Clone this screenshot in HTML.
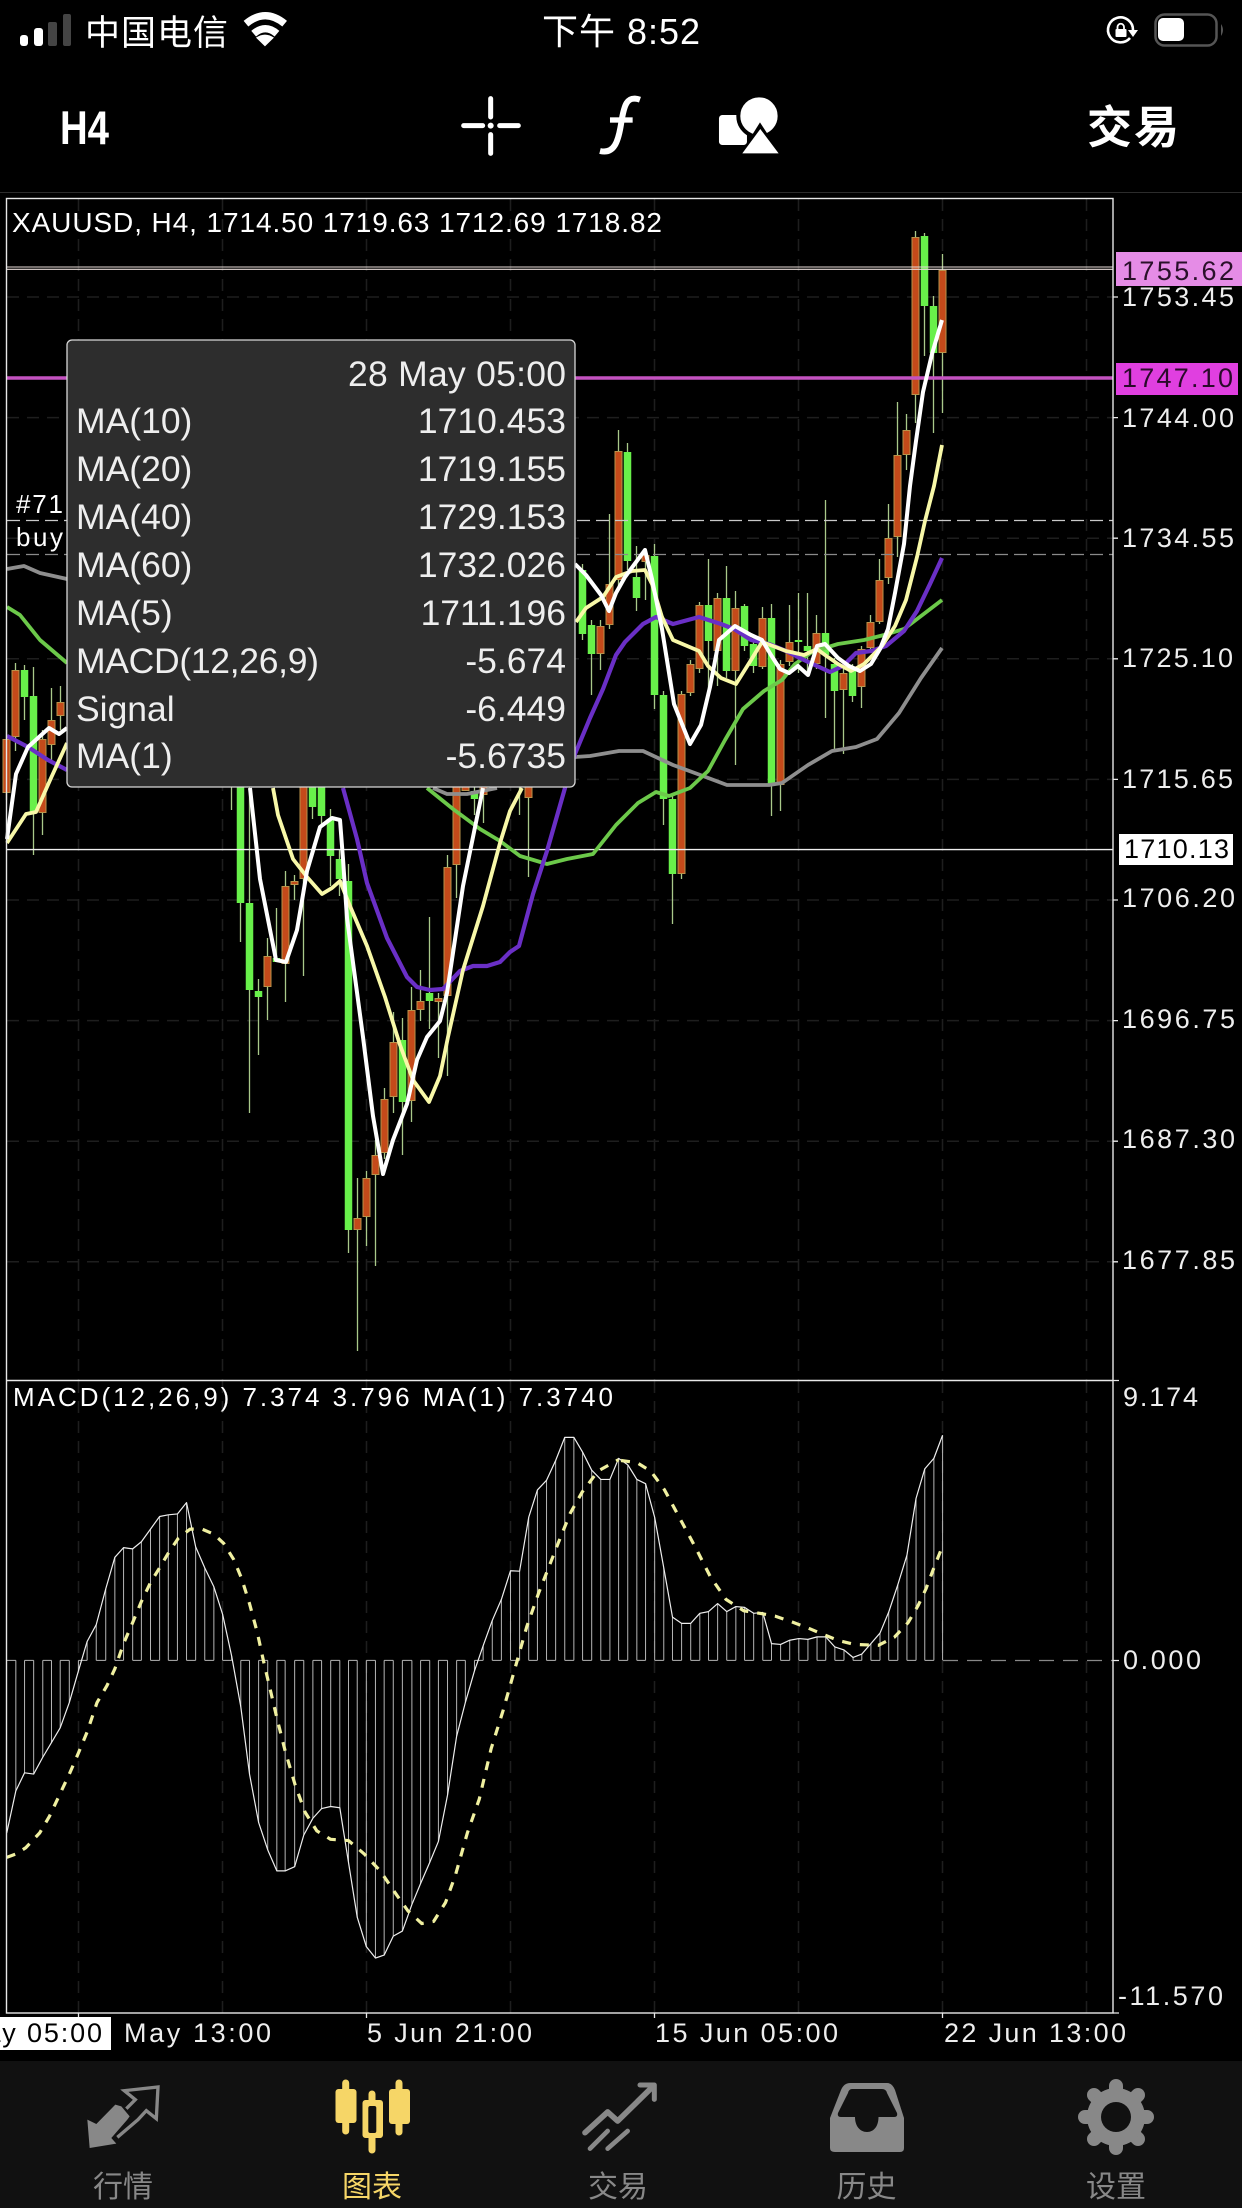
<!DOCTYPE html>
<html>
<head>
<meta charset="utf-8">
<title>XAUUSD H4</title>
<style>
html,body{margin:0;padding:0;background:#000;width:1242px;height:2208px;overflow:hidden}
svg{display:block}
text{font-family:"Liberation Sans","Noto Sans CJK SC",sans-serif;fill:#fff}
.ax{font-size:27px;fill:#eee}
.tm{font-size:27px;fill:#eee}
.tp{font-size:35.5px;fill:#eee}
.tr{font-size:35.5px;fill:#eee;text-anchor:end}
.tab{font-size:30px;fill:#888;text-anchor:middle}
polyline{fill:none;stroke-linejoin:round}
</style>
</head>
<body>
<svg xmlns="http://www.w3.org/2000/svg" width="1242" height="2208" viewBox="0 0 1242 2208">
<rect width="1242" height="2208" fill="#000"/>

<!-- status bar -->
<rect x="20" y="35" width="8" height="11" rx="3" fill="#fff"/>
<rect x="34" y="28" width="9" height="18" rx="3" fill="#fff"/>
<rect x="48" y="22" width="9" height="24" rx="2" fill="#444"/>
<rect x="63" y="14" width="8" height="32" rx="2" fill="#444"/>
<text x="85" y="45" font-size="35" textLength="143">中国电信</text>
<g transform="translate(0,5) scale(.3333)" fill="none" stroke="#fff" stroke-width="22">
<path d="M738 56 Q796 8 854 56"/>
<path d="M761 86 Q796 56 831 86"/>
<path d="M795 124 L768 98 Q795 80 822 98 Z" fill="#fff" stroke="none"/>
</g>
<text x="542" y="44" font-size="36" textLength="158">下午 8:52</text>
<g fill="none" stroke="#fff" stroke-width="2.6">
<path d="M1130 38 A12.5 12.5 0 1 1 1133 30"/>
</g>
<path d="M1128 30 H1138 L1133 37 Z" fill="#fff"/>
<rect x="1115.500" y="29" width="11" height="8" rx="1" fill="#fff"/>
<path d="M1117.500 29 V27 A3 3 0 0 1 1124 27 V29" fill="none" stroke="#fff" stroke-width="1.800"/>
<rect x="1155.500" y="14.500" width="61" height="31" rx="9" fill="none" stroke="#555" stroke-width="2.500"/>
<rect x="1158" y="18" width="26" height="23" rx="5" fill="#fff"/>
<path d="M1221 24 Q1225 30 1221 36 Z" fill="#555"/>

<!-- toolbar -->
<text x="60" y="144" font-size="47" font-weight="700" textLength="49" lengthAdjust="spacingAndGlyphs">H4</text>
<g transform="translate(450,85) scale(.3333)">
<path d="M41 122 H98 M149 122 H205 M122 41 V96 M122 149 V205" stroke="#fff" stroke-width="15" stroke-linecap="round" fill="none"/>
<circle cx="122" cy="122" r="9" fill="#fff"/>
<path d="M570 44 C530 30 522 62 514 112 C505 172 492 208 450 198" stroke="#fff" stroke-width="18" fill="none"/>
<rect x="480" y="97" width="68" height="16" fill="#fff"/>
<rect x="807" y="90" width="84" height="90" rx="10" fill="#fff"/>
<circle cx="927" cy="93" r="62" fill="#fff" stroke="#000" stroke-width="12"/>
<path d="M930 112 L868 212 H995 Z" fill="#000"/>
<path d="M931 132 L877 205 H986 Z" fill="#fff"/>
</g>
<text x="1087" y="143" font-size="45" font-weight="700" textLength="92" style="font-family:'Noto Sans CJK SC',sans-serif">交易</text>
<rect x="0" y="192" width="1242" height="1" fill="#2c2c2c"/>

<!-- grid -->
<g stroke="#1e1e1e" stroke-width="1.500" stroke-dasharray="12 8" fill="none">
<path d="M7 297H1113M7 417.600H1113M7 538.200H1113M7 658.800H1113M7 779.400H1113M7 900H1113M7 1020.600H1113M7 1141.200H1113M7 1261.800H1113"/>
<path d="M78.500 199V1380M222.500 199V1380M366.500 199V1380M510.500 199V1380M654.500 199V1380M798.500 199V1380M942.500 199V1380M1086.500 199V1380"/>
<path d="M78.500 1381V2013M222.500 1381V2013M366.500 1381V2013M510.500 1381V2013M654.500 1381V2013M798.500 1381V2013M942.500 1381V2013M1086.500 1381V2013"/>
</g>

<!-- candles -->
<g transform="translate(.5,0)" fill="none">
<path stroke="#a9c98a" stroke-width="1.300" d="M942 254V413M933 296V433M924 233V356M915 231V423M906 414V470M897 402V557M888 504V584M879 559V624M870 615V651M861 646V708M852 664V702M843 669V754M834 658V749M825 500V718M816 615V669M807 593V673M798 593V673M789 605V666M780 660V811M771 604V816M762 607V669M753 640V673M744 604V651M735 591V765M726 566V678M717 593V686M708 559V691M699 602V673M690 660V696M681 691V879M672 794V924M663 691V825M654 544V709M645 550V600M636 546V611M627 443V570M618 430V590M609 514V629M600 620V670M591 620V695M582 564V640M231 787V810M240 787V942M249 787V1113M258 979V1055M267 938V1020M276 908V962M285 871V1002M294 875V900M303 787V976M312 787V819M321 787V825M330 809V886M339 849V896M348 864V1253M357 1178V1351M366 1171V1246M375 1140V1266M384 1088V1159M393 1012V1113M402 1018V1155M411 987V1122M420 970V1021M429 917V1029M438 993V1058M447 855V1076M456 787V898M474 787V815M483 787V823M519 787V815M528 787V877M6 720V800M15 663V751M24 665V720M33 667V855M42 730V835M51 688V760M60 686V730"/>
<path stroke="#68f04a" stroke-width="7.500" d="M933 306V353M924 236V306M852 669V696M834 664V691M825 633V655M807 646V651M798 640V642M771 618V785M753 644V666M744 606V646M726 598V671M708 605V641M672 799V874M663 695V799M654 556V695M636 577V598M627 452V561M591 625V654M582 570V634M240 787V903M249 903V990M258 991V997M276 958V962M312 787V807M321 787V816M330 819V856M339 859V879M348 881V1230M402 1040V1102M429 993V1001M474 791V799M24 670V697M33 696V813"/>
<path stroke="#b9924a" stroke-width="8" d="M942 270V353M915 237V395M906 430V455M897 455V537M888 538V578M879 580V622M870 622V648M861 649V687M843 673V690M816 633V664M789 642V662M780 664V785M762 618V667M735 608V671M717 598V651M699 605V669M690 664V693M681 694V874M645 555V562M618 451V580M609 584V625M600 626V654M267 956V987M285 886V964M294 881V885M303 787V879M357 1218V1230M366 1178V1217M375 1155V1175M384 1099V1153M393 1042V1097M411 1010V1101M420 1001V1010M438 998V1002M447 867V996M456 787V865M465 787V791M483 787V795M528 787V798M6 739V793M15 670V737M42 739V813M51 720V745M60 702V716"/>
<path stroke="#c44a1a" stroke-width="6" d="M942 271V352M915 238V394M906 431V454M897 456V536M888 539V577M879 581V621M870 623V647M861 650V686M843 674V689M816 634V663M789 643V661M780 665V784M762 619V666M735 609V670M717 599V650M699 606V668M690 665V692M681 695V873M645 556V561M618 452V579M609 585V624M600 627V653M267 957V986M285 887V963M294 882V884M303 787V878M357 1219V1229M366 1179V1216M375 1156V1174M384 1100V1152M393 1043V1096M411 1011V1100M420 1002V1009M438 999V1001M447 868V995M456 787V864M465 787V790M483 787V794M528 787V797M6 740V792M15 671V736M42 740V812M51 721V744M60 703V715"/>
</g>

<!-- horizontal levels -->
<path d="M7 267H1113M7 269.300H1113" stroke="#e8dcd8" stroke-width="1.100"/>
<path d="M7 378H1113" stroke="#c452c0" stroke-width="3.500"/>
<path d="M7 520.500H1113" stroke="#c9c9c9" stroke-width="1.200" stroke-dasharray="13 6"/>
<path d="M7 554.500H1113" stroke="#8a8a8a" stroke-width="1.200" stroke-dasharray="13 6"/>
<path d="M7 849.600H1113" stroke="#eee" stroke-width="1.400"/>

<!-- moving averages -->
<g stroke-width="3.800">
<polyline stroke="#8e8e8e" points="942,648 921,678 899,713 877,739 856,747 832,751 808,765 782,783 769,785 727,785 703,776 673,765 643,751 619,751 590,756 575,757"/>
<polyline stroke="#8e8e8e" points="433,788 447,794 467,794 497,788"/>
<polyline stroke="#8e8e8e" points="7,569 24,566 40,573 67,579"/>
<polyline stroke="#6cc94a" points="942,600 925,613 904,629 884,635 864,640 838,644 812,652 795,664 782,680 764,691 743,709 725,740 708,771 690,788 669,796 656,792 638,803 616,825 593,854 567,859 547,864 520,856 500,841 480,829 453,809 427,788"/>
<polyline stroke="#6cc94a" points="7,607 20,615 40,640 67,663"/>
<polyline stroke="#6a2fc6" stroke-width="4.200" points="942,558 930,584 917,611 904,631 886,646 871,651 856,653 843,666 830,672 817,666 804,660 786,651 769,644 751,640 734,629 721,624 699,617 673,624 656,617 643,624 625,642 616,655 603,689 590,718 575,754 565,788"/>
<polyline stroke="#6a2fc6" stroke-width="4.200" points="343,788 357,839 367,883 387,938 407,977 417,987 430,990 443,989 460,971 473,966 487,966 500,962 510,952 519,946 533,894 547,851 565,788"/>
<polyline stroke="#6a2fc6" stroke-width="4.200" points="7,736 28,747 48,760 67,770"/>
<polyline stroke="#f8f8a8" points="942,445 934,486 925,521 917,557 906,600 895,626 882,646 864,664 851,671 838,664 825,655 817,649 804,655 786,651 773,646 762,642 751,660 736,684 721,678 708,666 699,651 673,640 662,617 652,584 645,570 632,571 616,577 603,597 586,608 576,622"/>
<polyline stroke="#f8f8a8" points="273,788 278,815 293,859 307,877 322,894 332,888 340,881 350,906 367,946 385,997 400,1045 413,1080 429,1102 440,1076 448,1037 463,970 483,906 500,843 510,811 522,788"/>
<polyline stroke="#f8f8a8" points="7,843 26,814 36,812 51,778 67,743"/>
<polyline stroke="#fff" stroke-width="4" points="942,320 932,354 923,392 916,441 910,486 904,544 895,593 888,629 880,649 871,664 860,671 849,666 838,658 825,644 817,646 808,675 798,666 789,673 780,669 771,655 762,640 751,635 735,626 719,640 710,687 701,725 690,744 674,704 662,629 652,579 645,550 625,577 616,593 609,611 601,595 586,575 575,564"/>
<polyline stroke="#fff" stroke-width="4" points="250,788 260,879 276,960 286,962 297,930 307,871 320,827 332,818 340,820 343,859 347,918 363,1037 373,1116 383,1174 393,1140 407,1104 417,1060 427,1037 440,1021 447,993 463,886 483,788"/>
<polyline stroke="#fff" stroke-width="4" points="7,839 16,774 28,747 49,728 59,734 67,728"/>
</g>

<!-- MACD histogram + lines (in crop coords) -->
<g transform="translate(0,1370) scale(.39604,.42092)">
<path vector-effect="non-scaling-stroke" stroke="#b5b5b5" stroke-width="1" fill="none" d="M17 690H40M62 690H85M108 690H130M152 690H175M198 690H220M243 690H267M290 690H312M335 690H357M380 690H403M425 690H448M471 690H494M517 690H540M562 690H585M608 690H630M653 690H676M699 690H720M744 690H767M790 690H812M835 690H858M880 690H902M925 690H948M970 690H993M1016 690H1040M1062 690H1085M1107 690H1130M1153 690H1175M1198 690H1220M1243 690H1266M1289 690H1312M1335 690H1357M1380 690H1403M1426 690H1449M1471 690H1494M1517 690H1540M1562 690H1568M40 690V1000M62 690V957M85 690V960M108 690V920M130 690V885M152 690V850M175 690V790M198 690V715M220 690V645M243 690V605M267 690V520M290 690V445M312 690V422M335 690V425M357 690V408M380 690V378M403 690V348M425 690V344M448 690V342M471 690V315M494 690V420M517 690V470M540 690V515M562 690V580M585 690V680M608 690V800M630 690V960M653 690V1075M676 690V1140M699 690V1190M720 690V1190M744 690V1180M767 690V1105M790 690V1065M812 690V1042M835 690V1037M858 690V1040M880 690V1170M902 690V1300M925 690V1370M948 690V1397M970 690V1390M993 690V1345M1016 690V1333M1040 690V1270M1062 690V1220M1085 690V1170M1107 690V1120M1130 690V1010M1153 690V870M1175 690V790M1198 690V715M1220 690V655M1243 690V595M1266 690V545M1289 690V477M1312 690V478M1335 690V350M1357 690V285M1380 690V262M1403 690V215M1426 690V160M1449 690V160M1471 690V195M1494 690V238M1517 690V260M1540 690V260M1562 690V210"/>
<polyline vector-effect="non-scaling-stroke" stroke="#eee" stroke-width="1.200" points="17,1100 40,1000 62,957 85,960 108,920 130,885 152,850 175,790 198,715 220,645 243,605 267,520 290,445 312,422 335,425 357,408 380,378 403,348 425,344 448,342 471,315 494,420 517,470 540,515 562,580 585,680 608,800 630,960 653,1075 676,1140 699,1190 720,1190 744,1180 767,1105 790,1065 812,1042 835,1037 858,1040 880,1170 902,1300 925,1370 948,1397 970,1390 993,1345 1016,1333 1040,1270 1062,1220 1085,1170 1107,1120 1130,1010 1153,870 1175,790 1198,715 1220,655 1243,595 1266,545 1289,477 1312,478 1335,350 1357,285 1380,262 1403,215 1426,160 1449,160 1471,195 1494,238 1517,260 1540,260 1562,210 1585,225"/>
<polyline vector-effect="non-scaling-stroke" stroke="#f0f0a0" stroke-width="3.200" stroke-dasharray="9 9" points="17,1158 40,1150 65,1135 100,1100 125,1060 150,1010 175,960 198,910 220,860 245,790 270,750 290,710 312,650 335,600 357,550 380,505 403,470 425,435 450,400 480,378 510,378 540,390 565,412 590,450 610,495 630,555 650,625 665,690 680,750 700,830 720,905 745,985 770,1050 800,1095 835,1115 880,1118 920,1150 960,1190 1000,1245 1030,1285 1065,1315 1095,1310 1125,1265 1150,1200 1180,1100 1210,1020 1240,900 1270,810 1300,710 1330,610 1360,530 1385,470 1410,410 1440,340 1470,290 1510,240 1562,213"/>
</g>
<g transform="translate(621,1370) scale(.39604,.42092)">
<path vector-effect="non-scaling-stroke" stroke="#b5b5b5" stroke-width="1" fill="none" d="M0 690H17M40 690H62M85 690H108M130 690H153M176 690H199M221 690H244M267 690H290M312 690H335M358 690H380M403 690H426M449 690H472M495 690H517M540 690H563M586 690H608M631 690H654M676 690H699M722 690H745M767 690H790M17 690V225M40 690V260M62 690V270M85 690V350M108 690V470M130 690V587M153 690V602M176 690V602M199 690V578M221 690V574M244 690V555M267 690V574M290 690V562M312 690V564M335 690V578M358 690V576M380 690V650M403 690V652M426 690V642M449 690V638M472 690V640M495 690V634M517 690V634M540 690V658M563 690V665M586 690V683M608 690V675M631 690V650M654 690V625M676 690V575M699 690V510M722 690V440M745 690V305M767 690V235M790 690V210M812 690V155"/>
<polyline vector-effect="non-scaling-stroke" stroke="#eee" stroke-width="1.200" points="17,225 40,260 62,270 85,350 108,470 130,587 153,602 176,602 199,578 221,574 244,555 267,574 290,562 312,564 335,578 358,576 380,650 403,652 426,642 449,638 472,640 495,634 517,634 540,658 563,665 586,683 608,675 631,650 654,625 676,575 699,510 722,440 745,305 767,235 790,210 812,155"/>
<polyline vector-effect="non-scaling-stroke" stroke="#f0f0a0" stroke-width="3.200" stroke-dasharray="9 9" points="0,215 40,220 75,240 110,285 150,355 190,425 225,490 265,545 310,572 350,578 390,585 430,598 470,612 510,628 550,643 590,652 650,654 690,635 725,600 750,560 770,520 790,470 812,418"/>
</g>
<path d="M943 1660.500H1113" stroke="#888" stroke-width="1.200" stroke-dasharray="15 9"/>

<!-- frame -->
<rect x="6.500" y="198.500" width="1106.500" height="1814.500" fill="none" stroke="#e8e8e8" stroke-width="1.400"/>
<path d="M7 1380.500H1113" stroke="#e8e8e8" stroke-width="1.400"/>
<path d="M1113 297H1118M1113 417.600H1118M1113 538.200H1118M1113 658.800H1118M1113 779.400H1118M1113 900H1118M1113 1020.600H1118M1113 1141.200H1118M1113 1261.800H1118M1113 1380.500H1119M1113 1660.500H1119M1113 2013H1119M78.500 2013V2018M366.500 2013V2018M654.500 2013V2018M942.500 2013V2018" stroke="#e8e8e8" stroke-width="1.300"/>

<!-- chart texts -->
<text x="12" y="232" font-size="28" textLength="650" fill="#fff">XAUUSD, H4, 1714.50 1719.63 1712.69 1718.82</text>
<text x="16" y="513" font-size="26" textLength="47">#71</text>
<text x="16" y="546" font-size="26" textLength="47">buy</text>
<text x="13" y="1406" font-size="26" textLength="600" fill="#eee">MACD(12,26,9) 7.374 3.796 MA(1) 7.3740</text>

<!-- axis labels -->
<rect x="1116" y="252" width="126" height="34" fill="#e58ce6"/>
<text x="1122" y="280" class="ax" style="fill:#2a102a" textLength="112">1755.62</text>
<text x="1122" y="306" class="ax" textLength="112">1753.45</text>
<rect x="1116" y="363" width="122" height="32" fill="#e03fe0"/>
<text x="1122" y="387" class="ax" style="fill:#2a0a2a" textLength="111">1747.10</text>
<text x="1122" y="427" class="ax" textLength="112">1744.00</text>
<text x="1122" y="547" class="ax" textLength="112">1734.55</text>
<text x="1122" y="667" class="ax" textLength="111">1725.10</text>
<text x="1122" y="788" class="ax" textLength="111">1715.65</text>
<rect x="1119" y="834" width="114" height="31" fill="#fff"/>
<text x="1124" y="858" class="ax" style="fill:#000" textLength="105">1710.13</text>
<text x="1122" y="907" class="ax" textLength="113">1706.20</text>
<text x="1122" y="1028" class="ax" textLength="113">1696.75</text>
<text x="1122" y="1148" class="ax" textLength="113">1687.30</text>
<text x="1122" y="1269" class="ax" textLength="113">1677.85</text>
<text x="1123" y="1406" class="ax" textLength="75">9.174</text>
<text x="1123" y="1669" class="ax" textLength="78">0.000</text>
<text x="1118" y="2005" class="ax" textLength="105">-11.570</text>

<!-- time axis -->
<rect x="0" y="2017" width="111" height="33" fill="#fff"/>
<text x="-82" y="2042" class="tm" style="fill:#000" textLength="184">28 May 05:00</text>
<text x="124" y="2042" class="tm" textLength="147">May 13:00</text>
<text x="367" y="2042" class="tm" textLength="165">5 Jun 21:00</text>
<text x="655" y="2042" class="tm" textLength="183">15 Jun 05:00</text>
<text x="944" y="2042" class="tm" textLength="182">22 Jun 13:00</text>

<!-- tooltip -->
<rect x="67" y="340" width="508" height="447" rx="5" fill="#2d2d2d" stroke="#d8d8d8" stroke-width="1.300"/>
<text x="566" y="386" class="tr" textLength="218">28 May 05:00</text>
<text x="76" y="433" class="tp">MA(10)</text><text x="566" y="433" class="tr">1710.453</text>
<text x="76" y="481" class="tp">MA(20)</text><text x="566" y="481" class="tr">1719.155</text>
<text x="76" y="529" class="tp">MA(40)</text><text x="566" y="529" class="tr">1729.153</text>
<text x="76" y="577" class="tp">MA(60)</text><text x="566" y="577" class="tr">1732.026</text>
<text x="76" y="625" class="tp">MA(5)</text><text x="566" y="625" class="tr">1711.196</text>
<text x="76" y="673" class="tp" textLength="243">MACD(12,26,9)</text><text x="566" y="673" class="tr">-5.674</text>
<text x="76" y="721" class="tp">Signal</text><text x="566" y="721" class="tr">-6.449</text>
<text x="76" y="768" class="tp">MA(1)</text><text x="566" y="768" class="tr">-5.6735</text>

<!-- tab bar -->
<rect x="0" y="2061" width="1242" height="147" fill="#111"/>
<!-- market icon -->
<g transform="translate(78,2078) scale(.3333)">
<path d="M28 125 L55 138 L112 80 L130 85 L155 115 L148 125 L100 180 L115 197 L35 210 Z" fill="#888"/>
<path d="M145 92 L172 65 L139 38 L240 27 L235 122 L205 98 L180 125 L118 178" fill="none" stroke="#888" stroke-width="10"/>
</g>
<text x="123" y="2197" class="tab">行情</text>
<!-- chart icon -->
<g fill="#f6d667" stroke="#f6d667" stroke-linecap="round">
<path d="M345.700 2083V2131M372 2094V2150M399 2083V2132" stroke-width="7" fill="none"/>
<rect x="335.500" y="2089" width="21" height="34" rx="3" stroke="none"/>
<rect x="362.500" y="2100" width="20.500" height="38" rx="3" stroke="none"/>
<rect x="389" y="2089" width="21" height="35" rx="3" stroke="none"/>
</g>
<rect x="368.300" y="2106" width="8" height="27" rx="2" fill="#111"/>
<text x="372" y="2197" class="tab" style="fill:#f6d667">图表</text>
<!-- trade icon -->
<g transform="translate(575,2076) scale(.3333)" fill="none" stroke="#888" stroke-linecap="round" stroke-linejoin="round">
<path d="M30 170 L98 108 L128 135 L225 40" stroke-width="17"/>
<path d="M195 27 H238 V70" stroke-width="15"/>
<path d="M45 218 L98 165 M98 218 L158 165" stroke-width="14"/>
</g>
<text x="618" y="2197" class="tab">交易</text>
<!-- history icon -->
<path d="M850 2083 H887 Q892 2083 895 2090 L904 2118 V2148 Q904 2152 900 2152 H835 Q830 2152 830 2148 V2118 L841 2090 Q844 2083 850 2083Z" fill="#888"/>
<path d="M852 2089 H882 Q886 2089 887 2093 L897 2113 Q898 2117 894 2117 H878.500 C878.500 2126 874 2132 867 2132 C860 2132 855 2126 855 2117 H841 Q837 2117 838 2113 L848 2093 Q849 2089 852 2089Z" fill="#111"/>
<text x="866.500" y="2197" class="tab">历史</text>
<!-- gear icon -->
<path d="M1116 2086V2148M1085 2117H1147M1094 2095L1138 2139M1094 2139L1138 2095" stroke="#888" stroke-width="14" stroke-linecap="round" fill="none"/>
<circle cx="1116" cy="2117" r="29" fill="#888"/>
<circle cx="1116" cy="2117" r="15" fill="#111"/>
<text x="1116" y="2197" class="tab">设置</text>
</svg>
</body>
</html>
